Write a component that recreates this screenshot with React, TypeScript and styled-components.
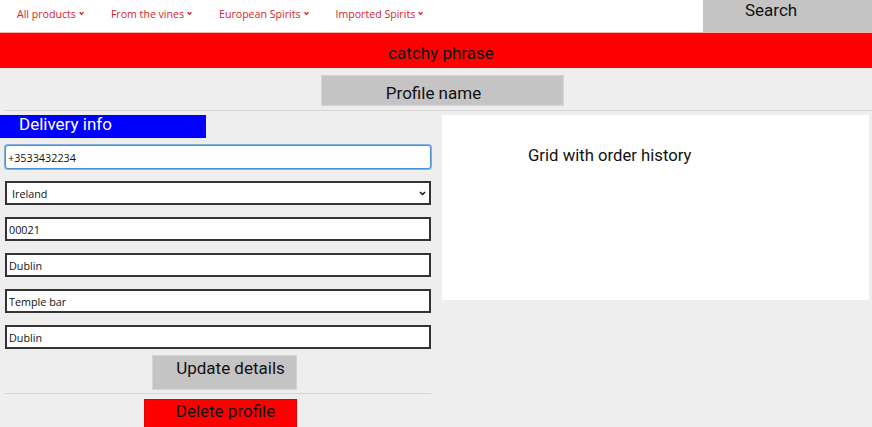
import React from "react";
import styled, { createGlobalStyle } from "styled-components";

const Global = createGlobalStyle`
  html, body { margin: 0; padding: 0; background: #eeeeee; }
  body { font-family: Roboto, "Liberation Sans", sans-serif; overflow: hidden; }
  * { box-sizing: border-box; }
`;

const Nav = styled.nav`
  display: flex;
  align-items: stretch;
  height: 32px;
  background: #ffffff;
`;

const Links = styled.ul`
  display: flex;
  align-items: center;
  gap: 27px;
  margin: 0;
  padding: 0 0 5px 17px;
  list-style: none;
`;

const NavLink = styled.li`
  display: flex;
  align-items: center;
  gap: 3px;
  color: #d9232e;
  font-family: "Open Sans", "Noto Sans", sans-serif;
  font-size: 10.6px;
  white-space: nowrap;
`;

const SearchButton = styled.button`
  margin-left: auto;
  width: 169px;
  border: none;
  background: #c4c4c4;
  color: #111;
  font-family: Roboto, sans-serif;
  font-size: 17px;
  padding: 0 0 0 42px;
  display: flex;
  align-items: flex-start;
`;

const Banner = styled.div`
  height: 36px;
  background: #ff0000;
  border-top: 1px solid #f3b3b3;
  display: flex;
  align-items: center;
  justify-content: center;
  padding: 4px 0 0 10px;
  font-size: 17px;
  color: #111;
`;

const ProfileRow = styled.div`
  display: flex;
  padding: 7px 0 4px 316px;
  border-bottom: 1px solid #d6d6d6;
  margin-left: 5px;
`;

const GrayButton = styled.button<{ $w: number; $h: number; $pad: string }>`
  width: ${(p) => p.$w}px;
  height: ${(p) => p.$h}px;
  border: 1px solid #d4d4d4;
  background: #c4c4c4;
  color: #111;
  font-family: Roboto, sans-serif;
  font-size: 17px;
  padding: ${(p) => p.$pad};
`;

const Main = styled.div`
  display: flex;
  gap: 11px;
  padding-top: 4px;
`;

const LeftCol = styled.section`
  width: 431px;
  display: flex;
  flex-direction: column;
`;

const SectionTitle = styled.h2`
  margin: 0;
  width: 206px;
  height: 23px;
  background: #0000ff;
  color: #ffffff;
  font-weight: 400;
  font-size: 17px;
  line-height: 19px;
  padding-left: 19px;
`;

const Form = styled.form`
  display: flex;
  flex-direction: column;
  gap: 12px;
  padding: 7px 0 0 5px;
`;

const Field = styled.input<{ $focused?: boolean }>`
  width: 426px;
  height: 24px;
  margin: 0;
  border: ${(p) => (p.$focused ? "1px solid #4a90d9" : "2px solid #333")};
  border-radius: ${(p) => (p.$focused ? "3px" : "0")};
  box-shadow: ${(p) => (p.$focused ? "0 0 0 1px #7fb0e6" : "none")};
  background: #fff;
  font-family: "Open Sans", "Noto Sans", sans-serif;
  font-size: 10.8px;
  color: #111;
  padding: 0 0 0 2px;
  outline: none;
`;

const SelectBox = styled.div`
  position: relative;
  width: 426px;
  height: 24px;
  border: 2px solid #333;
  background: #fff;
  display: flex;
  align-items: center;
  padding-left: 5px;
  font-family: "Open Sans", "Noto Sans", sans-serif;
  font-size: 10.8px;
  color: #111;
`;

const Caret = styled.svg`
  position: absolute;
  right: 3px;
  top: 8px;
`;

const Actions = styled.div`
  display: flex;
  flex-direction: column;
  align-items: flex-start;
  margin-top: 6px;
  padding-left: 5px;
`;

const UpdateWrap = styled.div`
  width: 426px;
  padding: 0 0 3px 147px;
  border-bottom: 1px solid #d6d6d6;
`;

const DeleteButton = styled.button`
  margin: 5px 0 0 139px;
  width: 153px;
  height: 30px;
  border: 1px solid #e00000;
  background: #ff0000;
  color: #111;
  font-family: Roboto, sans-serif;
  font-size: 17px;
  padding: 0 0 6px 10px;
`;

const Card = styled.section`
  width: 427px;
  height: 185px;
  background: #fff;
  padding: 31px 0 0 86px;
  font-size: 16.7px;
  color: #111;
`;

const Chevron = () => (
  <svg width="5" height="5" viewBox="0 0 5 5">
    <path d="M0.6 1.2 L2.5 3.2 L4.4 1.2" stroke="#d9232e" strokeWidth="1.5" fill="none" />
  </svg>
);

const links = ["All products", "From the vines", "European Spirits", "Imported Spirits"];

export default function App() {
  return (
    <>
      <Global />
      <Nav>
        <Links>
          {links.map((l) => (
            <NavLink key={l}>
              {l}
              <Chevron />
            </NavLink>
          ))}
        </Links>
        <SearchButton>Search</SearchButton>
      </Nav>
      <Banner>catchy phrase</Banner>
      <ProfileRow>
        <GrayButton $w={243} $h={31} $pad="4px 18px 0 0">Profile name</GrayButton>
      </ProfileRow>
      <Main>
        <LeftCol>
          <SectionTitle>Delivery info</SectionTitle>
          <Form>
            <Field $focused defaultValue="+3533432234" />
            <SelectBox>
              Ireland
              <Caret width="7" height="5" viewBox="0 0 7 5">
                <path d="M1 1 L3.5 3.5 L6 1" stroke="#111" strokeWidth="1.5" fill="none" />
              </Caret>
            </SelectBox>
            <Field defaultValue="00021" />
            <Field defaultValue="Dublin" />
            <Field defaultValue="Temple bar" />
            <Field defaultValue="Dublin" />
          </Form>
          <Actions>
            <UpdateWrap>
              <GrayButton $w={145} $h={35} $pad="0 0 9px 12px">Update details</GrayButton>
            </UpdateWrap>
            <DeleteButton>Delete profile</DeleteButton>
          </Actions>
        </LeftCol>
        <Card>Grid with order history</Card>
      </Main>
    </>
  );
}
